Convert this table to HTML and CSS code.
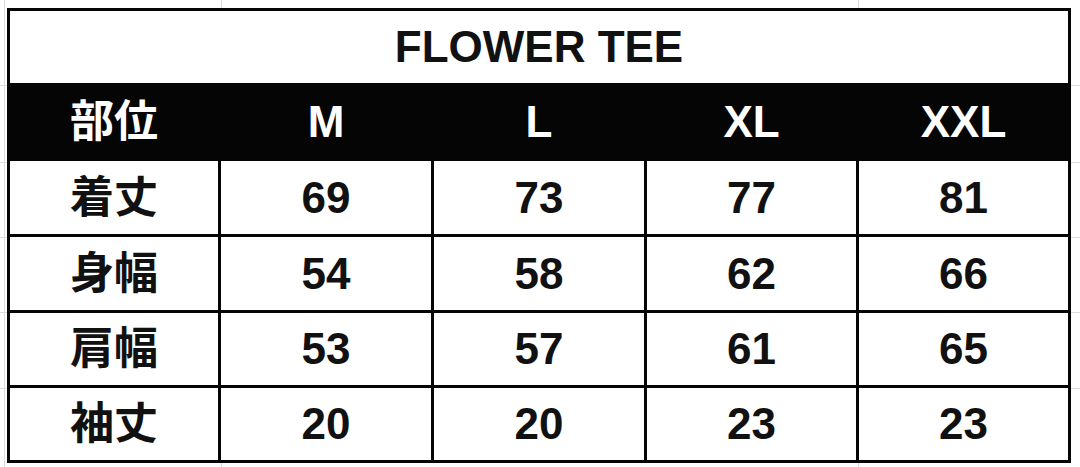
FILE: index.html
```html
<!DOCTYPE html>
<html lang="ja">
<head>
<meta charset="utf-8">
<title>FLOWER TEE</title>
<link rel="stylesheet" href="styles.css">
</head>
<body>
<div class="sheet">
  <div class="size-table">
    <div class="cell title">FLOWER TEE</div>
    <div class="cell head">部位</div>
    <div class="cell head">M</div>
    <div class="cell head">L</div>
    <div class="cell head">XL</div>
    <div class="cell head">XXL</div>

    <div class="cell">着丈</div>
    <div class="cell">69</div>
    <div class="cell">73</div>
    <div class="cell">77</div>
    <div class="cell">81</div>

    <div class="cell">身幅</div>
    <div class="cell">54</div>
    <div class="cell">58</div>
    <div class="cell">62</div>
    <div class="cell">66</div>

    <div class="cell">肩幅</div>
    <div class="cell">53</div>
    <div class="cell">57</div>
    <div class="cell">61</div>
    <div class="cell">65</div>

    <div class="cell">袖丈</div>
    <div class="cell">20</div>
    <div class="cell">20</div>
    <div class="cell">23</div>
    <div class="cell">23</div>
  </div>
</div>
</body>
</html>
```

FILE: styles.css
```css
html, body {
  margin: 0;
  padding: 0;
  background: #ffffff;
}

body {
  width: 1080px;
  height: 467px;
  overflow: hidden;
  font-family: "Liberation Sans", "Noto Sans CJK JP", sans-serif;
}

/* faint spreadsheet gridlines, visible only in the margins around the table */
.sheet {
  padding: 8px 0 0 7px;
  height: 467px;
  box-sizing: border-box;
  background-color: #ffffff;
  background-repeat: no-repeat;
  background-image:
    linear-gradient(#dcdcdc, #dcdcdc),
    linear-gradient(#dcdcdc, #dcdcdc),
    linear-gradient(#dcdcdc, #dcdcdc),
    linear-gradient(#dcdcdc, #dcdcdc),
    linear-gradient(#dcdcdc, #dcdcdc),
    linear-gradient(#dcdcdc, #dcdcdc),
    linear-gradient(#dcdcdc, #dcdcdc),
    linear-gradient(#dcdcdc, #dcdcdc);
  background-size:
    1px 467px,
    1px 467px,
    1px 467px,
    1080px 1px,
    1080px 1px,
    1080px 1px,
    1080px 1px,
    1080px 1px;
  background-position:
    4px 0,
    221px 0,
    858px 0,
    0 85px,
    0 162px,
    0 237px,
    0 312px,
    0 388px;
}

.size-table {
  display: grid;
  width: 1064px;
  box-sizing: border-box;
  grid-template-columns: 208px 210px 210px 209px 209px;
  grid-template-rows: 72px 72px 73px 73px 72px 72px;
  gap: 3px;
  padding: 3px;
  background: #050505;
}

.cell {
  display: flex;
  align-items: center;
  justify-content: center;
  background: #ffffff;
  color: #111111;
  font-size: 44px;
  font-weight: 700;
  line-height: 1;
}

.title {
  grid-column: 1 / -1;
}

.head {
  background: #050505;
  color: #ffffff;
}
```
